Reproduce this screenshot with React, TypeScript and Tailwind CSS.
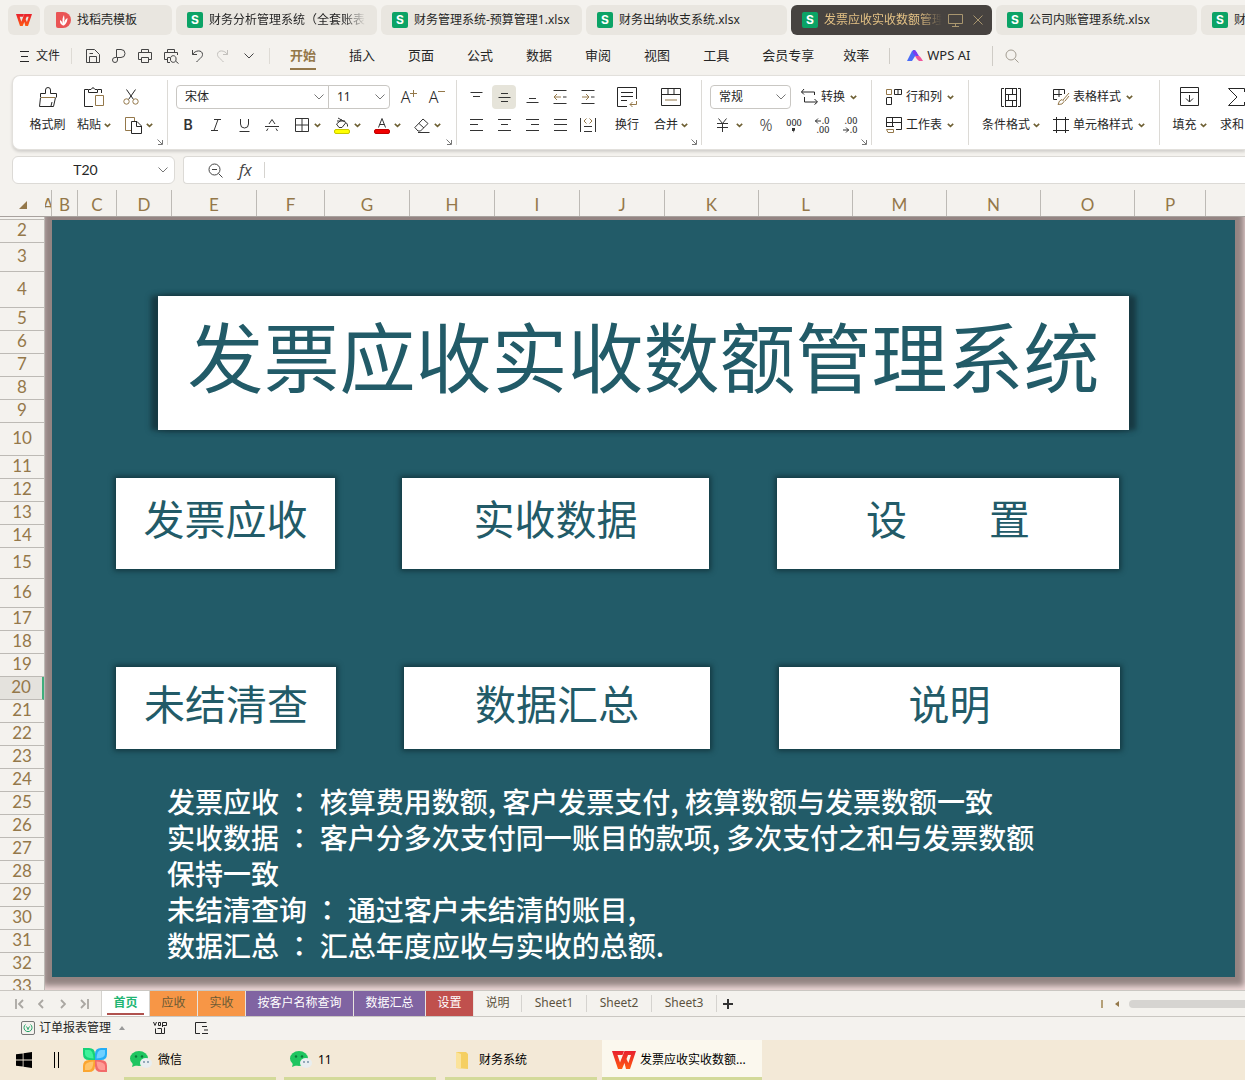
import type { ReactNode } from "react";

interface IconProps {
  w?: number;
  h?: number;
  d?: string;
  accent?: string;
  className?: string;
  children?: ReactNode;
}

const Icon: React.FC<IconProps> = ({ w = 18, h = 18, d, accent, className, children }) => (
  <svg
    width={w}
    height={h}
    viewBox={`0 0 ${w} ${h}`}
    fill="none"
    stroke="currentColor"
    aria-hidden="true"
    className={`shrink-0 ${className ?? ""}`}
  >
    {d && <path d={d} />}
    {accent && <path d={accent} stroke="#94784a" />}
    {children}
  </svg>
);

const Caret = () => (
  <Icon w={7} h={5} className="text-[#6f6135]">
    <path d="M.8 .8L3.5 3.4L6.2 .8" strokeWidth="1.6" />
  </Icon>
);

const Chevron = ({ className }: { className?: string }) => (
  <Icon w={10} h={6} d="M.5 .5L5 5L9.5 .5" className={className ?? "text-[#777]"} />
);

const SheetLogo = () => (
  <span className="flex h-4 w-4 shrink-0 items-center justify-center rounded-xs bg-[#0ba366] font-['Inter'] text-xs leading-4 font-bold text-white">
    S
  </span>
);

const WpsLogo = ({ w, h }: { w: number; h: number }) => (
  <svg width={w} height={h} viewBox="0 0 24 18" aria-hidden="true" className="shrink-0">
    <defs>
      <linearGradient id="wps" x1="0" y1="0" x2="0" y2="1">
        <stop offset="0" stopColor="#e8212f" />
        <stop offset="1" stopColor="#ff5a12" />
      </linearGradient>
    </defs>
    <path
      d="M0 0H12L10.5 4H5.5L8 11.5L12.5 0H24L18 18H14L12.5 12L10 18H6ZM16 4L14.5 8L16.4 12L19 4Z"
      fill="url(#wps)"
      fillRule="evenodd"
    />
  </svg>
);

const files = [
  { name: "财务分析管理系统（全套账表", fade: true },
  { name: "财务管理系统-预算管理1.xlsx" },
  { name: "财务出纳收支系统.xlsx" },
  { name: "发票应收实收数额管理", active: true },
  { name: "公司内账管理系统.xlsx" },
  { name: "财务" },
];

const FileTabs = () => (
  <div className="flex h-10 shrink-0 items-start gap-1 overflow-hidden pt-[5px] pl-2 text-xs">
    <button aria-label="WPS" className="flex h-[30px] w-8 shrink-0 items-center justify-center rounded-md bg-[#e9e6e0]">
      <WpsLogo w={16} h={12} />
    </button>
    <button className="flex h-[30px] w-32 shrink-0 items-center gap-1.5 rounded-md bg-[#e9e6e0] pl-3">
      <svg width="15" height="16" viewBox="0 0 15 16" aria-hidden="true">
        <path d="M1 0H7A8 8 0 0 1 7 16H2Q0 16 0 14V1Q0 0 1 0Z" fill="#ea5455" />
        <path d="M7 13.5Q3.5 12 4 8Q6 9 7 12Q5.5 7 8 3Q9 7 8 11Q9 7 11.5 6Q11.5 11 8 13.5Z" fill="#fff" />
      </svg>
      找稻壳模板
    </button>
    {files.map(({ name, active, fade }) => (
      <button
        key={name}
        className={`flex h-[30px] w-[201px] shrink-0 items-center gap-1.5 rounded-md pl-[11px] text-left ${
          active ? "bg-[#474340] text-[#e3c184]" : "bg-[#e9e6e0]"
        }`}
      >
        <SheetLogo />
        <span
          className={`overflow-hidden whitespace-nowrap ${
            active
              ? "w-[118px] [mask-image:linear-gradient(to_right,#000_80%,transparent)]"
              : fade
                ? "w-[157px] [mask-image:linear-gradient(to_right,#000_86%,transparent)]"
                : ""
          }`}
        >
          {name}
        </span>
        {active && (
          <span className="flex items-center gap-2.5 text-[#a9966f]">
            <Icon w={15} h={13} d="M.5 .5H14.5V9.5H.5ZM4 12.5H11M7.5 10V12" />
            <Icon w={10} h={10} d="M.5 .5L9.5 9.5M9.5 .5L.5 9.5" />
          </span>
        )}
      </button>
    ))}
  </div>
);

const quick = [
  { label: "保存", d: "M1.5 1.5H9.5L14.5 6.5V14.5H1.5ZM4.5 14V8.5H11.5V14M4.5 5.5H8" },
  { label: "输出", d: "M5.5 9V1.5H10A3.7 3.7 0 0 1 10 9.5H5.5M5.5 9.5H4A2.5 2.5 0 1 0 6.5 12V9.5" },
  { label: "打印", d: "M4.5 4V1.5H11.5V4M4.5 11.5H1.5V4.5H14.5V11.5H11.5M4.5 9.5H11.5V14.5H4.5Z" },
  { label: "打印预览", d: "M4.5 4V1.5H11.5V4M5 11.5H1.5V4.5H14.5V7M7 14.5H4.5V9.5H7M13 11A2.8 2.8 0 1 1 7.5 11A2.8 2.8 0 1 1 13 11M12.5 13L15.5 15.5" },
  { label: "撤销", d: "M3.5 2V6.5H8M3.5 6.5C6 2 13.5 1.5 13.5 6.5C13.5 9.5 10 11 7.5 14" },
];

const menus = ["开始", "插入", "页面", "公式", "数据", "审阅", "视图", "工具"];

const MenuBar = () => (
  <nav className="flex h-8 shrink-0 items-center overflow-hidden pl-5 text-[13px] whitespace-nowrap">
    <button className="flex items-center gap-[7px] text-xs">
      <Icon w={9} h={11} d="M0 .5H9M1 5.5H8M0 10.5H9" />
      文件
    </button>
    <span className="mr-2 ml-[11px] h-4 w-px bg-[#dedbd5]" />
    {quick.map(({ label, d }) => (
      <button key={label} aria-label={label} className="flex w-[26px] justify-center text-[#444]">
        <Icon w={16} h={16} d={d} />
      </button>
    ))}
    <button aria-label="恢复" className="flex w-[26px] justify-center text-[#c2c0bc]">
      <Icon w={16} h={16} d="M12.5 2V6.5H8M12.5 6.5C10 2 2.5 1.5 2.5 6.5C2.5 9.5 6 11 8.5 14" />
    </button>
    <button aria-label="更多" className="flex w-[26px] justify-center">
      <Chevron className="text-[#444]" />
    </button>
    <span className="mr-5 ml-[7px] h-4 w-px bg-[#dedbd5]" />
    <div className="flex gap-[33px]">
      {menus.map((m, i) => (
        <button
          key={m}
          className={
            i === 0 ? "-mb-1 border-b-2 border-[#94784a] pb-0.5 font-bold text-[#94784a]" : ""
          }
        >
          {m}
        </button>
      ))}
      <button>会员专享</button>
    </div>
    <button className="ml-[29px]">效率</button>
    <span className="mr-[17px] ml-5 h-4 w-px bg-[#cfccc6]" />
    <button className="flex items-center gap-1 text-[13px]">
      <svg width="16" height="12" viewBox="0 0 16 12" aria-hidden="true">
        <path d="M0 11L5 1Q6 0 8 0L10 3L5 11Z" fill="#4a6cf7" />
        <path d="M6 0Q8.5 0 9.5 2L12 6L9 6.5L6 3Z" fill="#7a3cf0" />
        <path d="M8 6H12Q13 6 16 11H12Q10 10 8 6Z" fill="#f0569c" />
      </svg>
      WPS AI
    </button>
    <span className="mr-3 ml-[22px] h-5 w-px bg-[#cfccc6]" />
    <button aria-label="搜索" className="text-[#a39d92]">
      <Icon w={14} h={14}>
        <circle cx="6" cy="6" r="5" />
        <path d="M9.5 9.5L13.5 13.5" />
      </Icon>
    </button>
  </nav>
);

const Corner = () => (
  <Icon w={6} h={6} d="M.5 .5L5 5M5.5 1V5.5H1" className="absolute right-1 bottom-0 text-[#777]" />
);

const Group = ({ className, corner, children }: { className: string; corner?: boolean; children: ReactNode }) => (
  <div className={`relative my-1 flex shrink-0 border-r border-[#dcdad6] pt-[3px] ${className}`}>
    {children}
    {corner && <Corner />}
  </div>
);

// large button: icon on the first ribbon row, caption on the second
const Big = ({ label, width, caret, children }: { label: string; width: string; caret?: boolean; children: ReactNode }) => (
  <button className={`flex h-14 shrink-0 flex-col items-center ${width}`}>
    <span className="flex h-7 items-center">{children}</span>
    <span className="flex h-7 items-center gap-[3px] whitespace-nowrap">
      {label}
      {caret && <Caret />}
    </span>
  </button>
);

const Tool = ({ label, on, children }: { label: string; on?: boolean; children: ReactNode }) => (
  <button aria-label={label} className="flex h-7 w-7 shrink-0 items-center justify-center">
    <span className={`flex h-6 w-6 items-center justify-center ${on ? "rounded-sm bg-[#e6e4da]" : ""}`}>
      {children}
    </span>
  </button>
);

const Drop = ({ label, children }: { label: string; children: ReactNode }) => (
  <button aria-label={label} className="flex h-7 w-10 shrink-0 items-center gap-1 pl-1">
    {children}
    <Caret />
  </button>
);

const Wide = ({ label, children }: { label: string; children: ReactNode }) => (
  <button className="flex h-7 shrink-0 items-center gap-[3px] whitespace-nowrap">
    {children}
    {label}
    <span className="ml-0.5">
      <Caret />
    </span>
  </button>
);

const Select = ({ label, value, className }: { label: string; value: string; className: string }) => (
  <label className={`relative flex h-6 items-center border border-[#c9c7c3] ${className}`}>
    <select aria-label={label} className="h-full w-full appearance-none bg-transparent pl-2 text-xs outline-none">
      <option>{value}</option>
    </select>
    <Chevron className="pointer-events-none absolute right-1 text-[#777]" />
  </label>
);

const digits = "flex flex-col items-end text-[9px] leading-[9px] font-medium";

const Ribbon = () => (
  <div className="mt-[3px] ml-3 flex h-[75px] shrink-0 overflow-hidden rounded-l-lg border border-r-0 border-[#e2e0dc] bg-white text-xs shadow-[0_2px_3px_rgba(0,0,0,0.14)]">
    <Group className="w-[155px] pl-3" corner>
      <Big label="格式刷" width="w-[45px]">
        <Icon
          w={20}
          h={20}
          d="M2.5 10V6.5H7.5V3A2.5 2.5 0 0 1 12.5 3V6.5H18.5V10.5M2.5 10.5L1.5 19.5H15.5L17.5 10.5M13 19L14 15"
          accent="M3 10.5H17"
        />
      </Big>
      <Big label="粘贴" width="w-12" caret>
        <Icon w={20} h={20} d="M4 2.5H.5V19.5H9M14 2.5H17.5V6M4.5 5.5V2.5H7Q9 -1 11 2.5H13.5V5.5Z" accent="M11.5 8.5H19.5V18.5H11.5Z" />
      </Big>
      <div>
        <button aria-label="剪切" className="flex h-7 w-[26px] items-center justify-center">
          <Icon w={16} h={16} d="M3.5 .5L10.5 10.5M12.5 .5L5.5 10.5">
            <circle cx="3.5" cy="12.5" r="2.7" stroke="#94784a" />
            <circle cx="12.5" cy="12.5" r="2.7" stroke="#94784a" />
          </Icon>
        </button>
        <button aria-label="复制" className="flex h-7 w-10 items-center gap-1 pl-[7px]">
          <Icon w={17} h={17} d="M6.5 4.5H12L16.5 9V16.5H6.5ZM11.5 5V9.5H16" accent="M6 13.5H.5V.5H9.5V4" />
          <Caret />
        </button>
      </div>
    </Group>

    <Group className="w-[289px] flex-col" corner>
      <div className="flex h-7 items-center pl-2">
        <Select label="字体" value="宋体" className="w-[153px] rounded-l-sm" />
        <Select label="字号" value="11" className="-ml-px w-[62px] rounded-r-sm" />
        <span className="ml-[5px] flex">
          <Tool label="增大字号">
            <span className="text-base font-light">A</span>
            <Icon w={7} h={7} accent="M0 3.5H7M3.5 0V7" className="-mt-2" />
          </Tool>
          <Tool label="减小字号">
            <span className="text-base font-light">A</span>
            <Icon w={7} h={7} accent="M0 3.5H7" className="-mt-3" />
          </Tool>
        </span>
      </div>
      <div className="flex h-7 items-center pl-1.5 text-[#333]">
        <Tool label="加粗">
          <span className="font-['Inter'] text-sm font-semibold">B</span>
        </Tool>
        <Tool label="倾斜">
          <Icon w={12} h={12} d="M4 .5H11M1 11.5H8M8 .5L4 11.5" />
        </Tool>
        <Tool label="下划线">
          <Icon w={11} h={13} d="M1.5 0V5A4 4 0 0 0 9.5 5V0M.5 12.5H10.5" />
        </Tool>
        <Tool label="删除线">
          <Icon w={14} h={12} d="M0 7.5H14M4 5L7 .5L10 5M3 9.5L1.5 12M11 9.5L12.5 12" />
        </Tool>
        <span className="ml-1 flex">
          <Drop label="边框">
            <Icon w={16} h={14} d="M1.5 .5H14.5V13.5H1.5ZM8 .5V13.5M1.5 7H14.5" />
          </Drop>
          <Drop label="填充颜色">
            <Icon w={16} h={17} d="M4 1L12 5.5L8 10.5H5L2.5 7L8 2.5M3 4H11M12.5 6Q14 8 13.5 9.5">
              <rect x=".5" y="12.5" width="15" height="4" rx="1.5" fill="#ffff00" stroke="#c8c800" />
            </Icon>
          </Drop>
          <Drop label="字体颜色">
            <Icon w={16} h={17} d="M4.5 10.5L8 1.5L11.5 10.5M5.5 7.5H10.5">
              <rect x=".5" y="12.5" width="15" height="4" rx="1.5" fill="#f00000" stroke="#c00000" />
            </Icon>
          </Drop>
          <Drop label="清除">
            <Icon w={16} h={15} d="M9 1L14 5.5L6.5 13H4L.8 9.5ZM5 5.5L10 10M4 14.5H15.5" />
          </Drop>
        </span>
      </div>
    </Group>

    <Group className="w-[245px] pl-[5px]" corner>
      <div className="w-[141px] text-[#333]">
        <div className="flex">
          <Tool label="顶端对齐"><Icon w={13} h={14} d="M.5 2.5H12.5M3 6.5H10" /></Tool>
          <Tool label="垂直居中" on><Icon w={13} h={14} d="M3 3.5H10M.5 7.5H12.5M3 11.5H10" /></Tool>
          <Tool label="底端对齐"><Icon w={13} h={14} d="M3 8.5H10M.5 12.5H12.5" /></Tool>
          <Tool label="减少缩进"><Icon w={14} h={14} d="M.5 .5H13.5M10 7H13.5M.5 13.5H13.5" accent="M1 7H8M4 4L1 7L4 10" /></Tool>
          <Tool label="增加缩进"><Icon w={14} h={14} d="M.5 .5H13.5M10 7H13.5M.5 13.5H13.5" accent="M1 7H8M5 4L8 7L5 10" /></Tool>
        </div>
        <div className="flex">
          <Tool label="左对齐"><Icon w={13} h={12} d="M0 .5H13M0 5.5H8M0 11.5H13" /></Tool>
          <Tool label="居中"><Icon w={13} h={12} d="M0 .5H13M3 5.5H10M0 11.5H13" /></Tool>
          <Tool label="右对齐"><Icon w={13} h={12} d="M0 .5H13M5 5.5H13M0 11.5H13" /></Tool>
          <Tool label="两端对齐"><Icon w={13} h={12} d="M0 .5H13M0 5.5H13M0 11.5H13" /></Tool>
          <Tool label="分散对齐"><Icon w={16} h={14} d="M.5 0V14M15.5 0V14M4 8.5H12M4 13.5H12" accent="M6.5 .5L4 3L6.5 5.5M9.5 .5L12 3L9.5 5.5" /></Tool>
        </div>
      </div>
      <Big label="换行" width="w-12">
        <Icon w={20} h={20} d="M10 19.5H.5V.5H19.5V12M4 5.5H16M4 9.5H16M4 13.5H10" accent="M19.5 14V17.5H13M15.5 15L13 17.5L15.5 20" />
      </Big>
      <Big label="合并" width="w-10" caret>
        <Icon w={20} h={18} d="M.5 .5H19.5V17.5H.5ZM.5 6.5H19.5M7 .5V6M13 .5V6" accent="M4 12H16" />
      </Big>
    </Group>

    <Group className="w-[170px] flex-col pl-2" corner>
      <div className="flex h-7 items-center gap-2.5">
        <Select label="数字格式" value="常规" className="w-[81px] rounded-sm" />
        <Wide label="转换">
          <Icon w={17} h={16} d="M3 0L.5 3L3 5.5M.5 3H13.5V6M3.5 8V13H16M13.5 10L16.5 13L13.5 15.5" />
        </Wide>
      </div>
      <div className="flex h-7 items-center text-[#333]">
        <Drop label="货币">
          <Icon w={18} h={14} d="M4.5 .5L8.5 5.5L12.5 .5M3 5.5H14M3 9.5H14M8.5 5.5V14" />
        </Drop>
        <span className="ml-0.5 flex">
          <Tool label="百分比">
            <span className="text-base font-light">%</span>
          </Tool>
          <Tool label="千位分隔">
            <span className="flex flex-col items-center text-[9px] leading-[9px] font-medium">
              000
              <Icon w={3} h={5} className="mt-px">
                <path d="M0 0H3V2L1 5L1.5 3H0Z" fill="currentColor" stroke="none" />
              </Icon>
            </span>
          </Tool>
          <Tool label="增加小数位">
            <span className={digits}>
              <span className="flex items-center gap-px">
                <Icon w={6} h={6} d="M0 3H6M3 .5L.5 3L3 5.5" />
                .0
              </span>
              <span>.00</span>
            </span>
          </Tool>
          <Tool label="减少小数位">
            <span className={digits}>
              <span>.00</span>
              <span className="flex items-center gap-px">
                <Icon w={6} h={6} d="M0 3H6M3 .5L5.5 3L3 5.5" />
                .0
              </span>
            </span>
          </Tool>
        </span>
      </div>
    </Group>

    <Group className="w-[97px] flex-col pl-3.5">
      <Wide label="行和列">
        <Icon w={17} h={16} d="M8.5 5.5V.5H15.5V5.5H8.5M12 .5V5M.5 9V15.5H5.5V9M.5 8.5H6" accent="M.5 .5H5.5V5.5H.5Z" />
      </Wide>
      <Wide label="工作表">
        <Icon w={17} h={16} d="M.5 10V.5H15.5V12.5H10M.5 5.5H15.5M6.5 .5V10M.5 9.5H8" accent="M.5 12.5H7.5V15.5H2L.5 12.5" />
      </Wide>
    </Group>

    <Group className="w-[191px] pl-2">
      <Big label="条件格式" width="w-[68px]" caret>
        <Icon w={20} h={19} d="M3 .5H.5V18.5H3M17 .5H19.5V18.5H17M4.5 0V19M15.5 0V19M4.5 .5H15.5M4.5 6.5H15.5M4.5 12.5H15.5M4.5 18.5H15.5M11.5 .5V6.5M7.5 6.5V12.5M11.5 12.5V18.5" />
      </Big>
      <div className="ml-2">
        <Wide label="表格样式">
          <Icon w={17} h={16} d="M4 10.5H.5V.5H11.5V5M.5 5.5H9M6 .5V8" accent="M16 4L10 11M12 12L16 7M9 10.5Q6 11 5 15.5Q10 16 11 12.5Z" />
        </Wide>
        <Wide label="单元格样式">
          <Icon w={17} h={16} d="M3.5 0V16M12.5 0V16M0 2.5H16M0 13.5H16" />
        </Wide>
      </div>
    </Group>

    <div className="my-1 flex pt-[3px] pl-1.5">
      <Big label="填充" width="w-[47px]" caret>
        <Icon w={20} h={20} d="M.5 .5H18.5V18.5H.5ZM.5 5.5H18.5M9.5 8V15M6 11.5L9.5 15L13 11.5" />
      </Big>
      <Big label="求和" width="w-12" caret>
        <Icon w={18} h={18} d="M16.5 4V.5H.5L9 9L.5 17.5H16.5V14" />
      </Big>
    </div>
  </div>
);

const FormulaBar = () => (
  <div className="mt-1.5 flex h-7 shrink-0 gap-2 pl-3">
    <div className="flex w-[163px] shrink-0 items-center rounded-md border border-[#dcdad6] bg-white pr-1.5">
      <input aria-label="名称框" defaultValue="T20" className="w-full min-w-0 bg-transparent text-center font-['Lato'] text-sm outline-none" />
      <Chevron />
    </div>
    <div className="flex min-w-0 flex-1 items-center rounded-l-sm border border-r-0 border-[#dcdad6] bg-white pl-6 text-[#444]">
      <Icon w={15} h={15} d="M10.5 10.5L14.5 14.5M4 6.5H9">
        <circle cx="6.5" cy="6.5" r="5.5" />
      </Icon>
      <span className="ml-4 font-['Open_Sans'] text-base leading-5 italic">fx</span>
      <span className="ml-3 h-4 w-px bg-[#d5d3cf]" />
      <input aria-label="公式" className="min-w-0 flex-1 bg-transparent px-2 outline-none" />
    </div>
  </div>
);

const columns = [
  { name: "A", width: 7 },
  { name: "B", width: 26 },
  { name: "C", width: 39 },
  { name: "D", width: 55 },
  { name: "E", width: 85 },
  { name: "F", width: 68 },
  { name: "G", width: 85 },
  { name: "H", width: 85 },
  { name: "I", width: 85 },
  { name: "J", width: 85 },
  { name: "K", width: 94 },
  { name: "L", width: 94 },
  { name: "M", width: 94 },
  { name: "N", width: 94 },
  { name: "O", width: 94 },
  { name: "P", width: 71 },
];

const rowHeights: Record<number, number> = { 3: 29, 4: 36, 10: 33, 15: 31, 16: 29 };
const rows = Array.from({ length: 32 }, (_, i) => ({ n: i + 2, height: rowHeights[i + 2] ?? 23 }));

// the TC face centres the full-width colon in its box
const Colon = () => (
  <span lang="zh-TW" className="font-['Noto_Sans_CJK_TC',sans-serif]">：</span>
);

const card = "flex shrink-0 items-center justify-center bg-white pb-3 shadow-[0_0_5px_2px_rgba(15,45,52,0.75)]";

const Dashboard = () => (
  <div className="mt-[3px] mr-2.5 mb-[13px] ml-[7px] min-w-0 flex-1 overflow-hidden bg-[#225b68] font-['Noto_Sans_CJK_SC',sans-serif] text-[#225b68] shadow-[0_0_6px_9px_#938482]">
    <h1 className="mt-[76px] ml-[106px] flex h-[134px] w-[971px] items-center justify-center bg-white pb-[18px] text-[76px] leading-none whitespace-nowrap shadow-[-7px_0_5px_#173a43,7px_0_5px_#173a43,0_0_5px_1px_#1a434d]">
      发票应收实收数额管理系统
    </h1>
    <div className="mt-12 ml-16 flex h-[91px] text-[41px] leading-none whitespace-pre">
      <button className={`${card} w-[219px]`}>发票应收</button>
      <button className={`${card} ml-[67px] w-[307px]`}>实收数据</button>
      <button className={`${card} ml-[68px] w-[342px]`}>{"设\u3000\u3000置"}</button>
    </div>
    <div className="mt-[98px] ml-16 flex h-[82px] text-[41px] leading-none">
      <button className={`${card} w-[220px]`}>未结清查</button>
      <button className={`${card} ml-[68px] w-[306px]`}>数据汇总</button>
      <button className={`${card} ml-[69px] w-[341px]`}>说明</button>
    </div>
    <div className="mt-[34px] ml-[115px] w-[880px] text-[28px] leading-9 font-medium text-white">
      <p>发票应收 <Colon /> 核算费用数额, 客户发票支付, 核算数额与发票数额一致</p>
      <p>实收数据 <Colon /> 客户分多次支付同一账目的款项, 多次支付之和与发票数额保持一致</p>
      <p>未结清查询 <Colon /> 通过客户未结清的账目,</p>
      <p>数据汇总 <Colon /> 汇总年度应收与实收的总额.</p>
    </div>
  </div>
);

const Grid = () => (
  <div className="mt-1.5 flex min-h-0 flex-1 flex-col">
    <div className="flex h-[27px] shrink-0 overflow-hidden border-b border-[#a8a29e] font-['Lato'] text-[17px] text-[#94784a]">
      <div className="flex w-[45px] shrink-0 items-center justify-end pt-1 pr-[18px]">
        <Icon w={8} h={8}>
          <path d="M0 8L8 0V8Z" fill="#94784a" stroke="none" />
        </Icon>
      </div>
      {columns.map(({ name, width }) => (
        <div
          key={name}
          className="flex shrink-0 items-center justify-center overflow-hidden border-r border-[#bdbab5] pt-[3px]"
          style={{ width }}
        >
          {name}
        </div>
      ))}
    </div>
    <div className="flex min-h-0 flex-1 overflow-hidden">
      <div className="w-[45px] shrink-0 overflow-hidden border-r border-[#bdbab5] font-['Lato'] text-[17px] text-[#94784a]">
        <div className="h-[3px] border-b border-[#bdbab5]" />
        {rows.map(({ n, height }) => (
          <div
            key={n}
            className={`flex items-center justify-center border-b border-[#bdbab5] pb-0.5 ${
              n === 20 ? "border-r-2 border-r-[#3fae7c] bg-[#e4e2dd]" : ""
            }`}
            style={{ height }}
          >
            {n}
          </div>
        ))}
      </div>
      <div className="flex min-w-0 flex-1 overflow-hidden bg-[#f0dada]">
        <Dashboard />
      </div>
    </div>
  </div>
);

const sheets = [
  { name: "应收", style: "w-12 bg-[#f79646] text-[#6b5a35]" },
  { name: "实收", style: "w-12 bg-[#f79646] text-[#6b5a35]" },
  { name: "按客户名称查询", style: "w-[108px] bg-[#8064a2] text-white" },
  { name: "数据汇总", style: "w-[72px] bg-[#8064a2] text-white" },
  { name: "设置", style: "w-12 bg-[#c0504d] text-white" },
];

const plainSheets = [
  { name: "说明", style: "w-12" },
  { name: "Sheet1", style: "w-[65px]" },
  { name: "Sheet2", style: "w-[65px]" },
  { name: "Sheet3", style: "w-[65px]" },
];

const SheetTabs = () => (
  <div className="flex h-[27px] shrink-0 items-stretch overflow-hidden border-y border-[#cac7c2] text-xs text-[#5c5240]">
    <div className="flex w-[101px] shrink-0 items-center gap-3.5 pl-[15px] text-[#aaa7a2]">
      <button aria-label="第一张"><Icon w={9} h={10}><path d="M1 0V10M8 1L4 5L8 9" strokeWidth="1.8" /></Icon></button>
      <button aria-label="上一张"><Icon w={6} h={10}><path d="M5 1L1 5L5 9" strokeWidth="1.8" /></Icon></button>
      <button aria-label="下一张" className="ml-0.5"><Icon w={6} h={10}><path d="M1 1L5 5L1 9" strokeWidth="1.8" /></Icon></button>
      <button aria-label="最后一张"><Icon w={9} h={10}><path d="M8 0V10M1 1L5 5L1 9" strokeWidth="1.8" /></Icon></button>
    </div>
    <button className="flex w-[49px] shrink-0 flex-col items-center justify-end border-x border-[#d5d3cf] bg-white px-[5px] pb-px font-bold text-[#21b573]">
      首页
      <span className="mt-0.5 h-0.5 w-full bg-[#b0524e]" />
    </button>
    {sheets.map(({ name, style }) => (
      <button key={name} className={`shrink-0 border-r border-[#e8e4de] pb-0.5 ${style}`}>
        {name}
      </button>
    ))}
    {plainSheets.map(({ name, style }) => (
      <button key={name} className={`my-1 shrink-0 border-r border-[#d5d3cf] pb-0.5 ${style}`}>
        {name}
      </button>
    ))}
    <button aria-label="新建工作表" className="ml-1.5 text-[#333]">
      <Icon w={10} h={10}><path d="M5 0V10M0 5H10" strokeWidth="2" /></Icon>
    </button>
    <div className="ml-auto flex w-36 shrink-0 items-center">
      <span className="h-2 w-0.5 bg-[#b5a078]" />
      <Icon w={4} h={6} className="mr-2.5 ml-3">
        <path d="M4 0V6L0 3Z" fill="#94784a" stroke="none" />
      </Icon>
      <span className="h-2 flex-1 rounded-l-full bg-[#d6d4d1]" />
    </div>
  </div>
);

const StatusBar = () => (
  <div className="flex h-[23px] shrink-0 items-center pb-0.5 pl-[21px] text-xs">
    <button className="flex items-center gap-1">
      <Icon w={14} h={14} className="text-[#777]">
        <rect x=".5" y=".5" width="13" height="13" rx="1.5" />
        <path d="M4.5 3.5A4 4 0 1 0 9.5 3.5M5.5 5.5L7 8L8.5 5.5M7 8V9" stroke="#21a366" />
      </Icon>
      订单报表管理
      <Icon w={6} h={4} className="ml-1">
        <path d="M0 4L3 0L6 4Z" fill="#999" stroke="none" />
      </Icon>
    </button>
    <button aria-label="VB" className="ml-7">
      <Icon w={14} h={12} d="M.5 0L2 3.5L3.5 0M5.5 .5H7.5V3.5H5.5ZM9.5 5V.5H13.5V3.5H9.5M2.5 6.5V11.5H8.5V6.5H4.5M8.5 11.5H11.5V5.5" />
    </button>
    <button aria-label="目录" className="ml-7">
      <Icon w={14} h={12} d="M5 11.5H.5V.5H11.5M7 4.5H12M9 8H13M7 11.5H13" />
    </button>
  </div>
);

const WeChat = () => (
  <svg width="22" height="18" viewBox="0 0 22 18" aria-hidden="true" className="shrink-0">
    <ellipse cx="9" cy="7.5" rx="9" ry="7.5" fill="#1fc560" />
    <path d="M3 12L2 16L7 14Z" fill="#1fc560" />
    <circle cx="6" cy="5.5" r="1.2" fill="#0b7a3a" />
    <circle cx="12" cy="5.5" r="1.2" fill="#0b7a3a" />
    <ellipse cx="16" cy="12" rx="6" ry="5" fill="#e9eef0" />
    <circle cx="14" cy="11" r=".9" fill="#6b8aa0" />
    <circle cx="18" cy="11" r=".9" fill="#6b8aa0" />
  </svg>
);

const task = "flex h-10 shrink-0 items-center border-b-3 border-[#d3da9a] pt-0.5";

const TaskBar = () => (
  <div className="flex h-10 shrink-0 items-center overflow-hidden bg-[#f3e9d7] pl-4 text-xs text-black">
    <button aria-label="开始菜单">
      <svg width="16" height="16" viewBox="0 0 16 16" aria-hidden="true">
        <path d="M0 2.3L6.7 1.4V7.6H0ZM7.5 1.2L16 0V7.6H7.5ZM0 8.4H6.7V14.6L0 13.7ZM7.5 8.4H16V16L7.5 14.8Z" />
      </svg>
    </button>
    <span className="ml-[22px] h-4 w-[5px] border-x border-black" />
    <button aria-label="桌面" className="ml-6">
      <svg width="24" height="24" viewBox="0 0 24 24" aria-hidden="true">
        <path d="M0 0H6Q12 0 12 6V12H6Q0 12 0 6Z" fill="#17d277" />
        <path d="M24 0H18Q12 0 12 6V12H18Q24 12 24 6Z" fill="#25aef5" />
        <path d="M0 24H6Q12 24 12 18V12H6Q0 12 0 18Z" fill="#fba631" />
        <path d="M24 24H18Q12 24 12 18V12H18Q24 12 24 18Z" fill="#f26a6a" />
        <path d="M2 2H6Q10 2 10.5 10.5Q2 10 2 6Z" fill="#3ff29a" />
        <path d="M22 2H18Q14 2 13.5 10.5Q22 10 22 6Z" fill="#6fd0ff" />
        <path d="M2 22H6Q10 22 10.5 13.5Q2 14 2 18Z" fill="#ffc46b" />
        <path d="M22 22H18Q14 22 13.5 13.5Q22 14 22 18Z" fill="#ff9b95" />
      </svg>
    </button>
    <button className={`${task} ml-[17px] w-[152px] gap-1.5 pl-1.5`}>
      <WeChat />
      微信
    </button>
    <button className={`${task} ml-2 w-[152px] gap-1.5 pl-1.5`}>
      <WeChat />
      11
    </button>
    <button className={`${task} ml-[9px] w-[152px] gap-2.5 pl-2.5`}>
      <svg width="14" height="18" viewBox="0 0 14 18" aria-hidden="true">
        <path d="M1 1H11L13 3V18L1 17Z" fill="#f5cf62" />
        <path d="M1 1L6 3V18L1 17Z" fill="#fbe39a" />
      </svg>
      财务系统
    </button>
    <button className={`${task} ml-[5px] w-40 gap-1 bg-[#fbf8ee] pl-2.5`}>
      <WpsLogo w={24} h={18} />
      发票应收实收数额...
    </button>
  </div>
);

export default function App() {
  return (
    <div className="flex h-screen w-full flex-col overflow-hidden bg-[#f4f2ee] font-['Noto_Sans','Noto_Sans_CJK_SC',sans-serif] text-[#262626]">
      <FileTabs />
      <MenuBar />
      <Ribbon />
      <FormulaBar />
      <Grid />
      <SheetTabs />
      <StatusBar />
      <TaskBar />
    </div>
  );
}
